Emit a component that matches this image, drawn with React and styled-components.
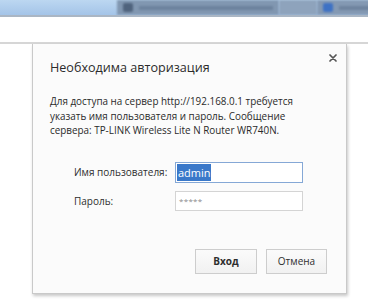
import styled, { createGlobalStyle } from "styled-components";

const Global = createGlobalStyle`
  html, body {
    margin: 0;
    padding: 0;
    background: #ffffff;
    font-family: "Open Sans", "Noto Sans", sans-serif;
  }
`;

const Page = styled.div`
  width: 368px;
  height: 304px;
  overflow: hidden;
  display: flex;
  flex-direction: column;
  background: #ffffff;
`;

const Taskbar = styled.div`
  height: 15px;
  display: flex;
  align-items: center;
  background: linear-gradient(180deg, #bcd7f1 0%, #a4c4e8 100%);
  border-bottom: 2px solid #aab6c4;
  overflow: hidden;
`;

const Tab = styled.div`
  flex: ${({ grow }) => grow || 0} 0 ${({ w }) => w}px;
  align-self: stretch;
  background: ${({ bg }) => bg};
  display: flex;
  align-items: center;
  gap: 6px;
  padding: 0 6px;
  filter: blur(1.2px);
`;

const TabIcon = styled.div`
  width: 10px;
  height: 9px;
  border-radius: 2px;
  background: ${({ bg }) => bg};
`;

const TabText = styled.div`
  flex: 1;
  height: 4px;
  background: #5f7490;
  opacity: 0.6;
`;

const Toolbar = styled.div`
  height: 25px;
  background: #ffffff;
  border-bottom: 2px solid #d6d6d6;
`;

const Content = styled.div`
  flex: 1;
  padding-left: 32px;
`;

const Dialog = styled.div`
  width: 315px;
  height: 250px;
  box-sizing: border-box;
  background: #fbfbfb;
  border: 1px solid #c9c9c9;
  border-top: none;
  box-shadow: 1px 2px 3px rgba(0, 0, 0, 0.22);
  padding: 14px 19px 0 17px;
  position: relative;
  color: #333;
`;

const Close = styled.svg`
  position: absolute;
  right: 9px;
  top: 10px;
  width: 8px;
  height: 8px;
`;

const Title = styled.div`
  font-size: 12.6px;
  color: #2b2b2b;
  line-height: 20px;
`;

const Message = styled.div`
  margin-top: 16px;
  font-size: 9.9px;
  line-height: 14.5px;
  color: #2a2a2a;
  white-space: nowrap;
`;

const Form = styled.div`
  margin-top: 24px;
  display: grid;
  grid-template-columns: 101px 128px;
  grid-template-rows: 21px 20px;
  row-gap: 8px;
  align-items: center;
  padding-left: 24px;
`;

const Label = styled.div`
  font-size: 10px;
  color: #2e2e2e;
  white-space: nowrap;
`;

const Field = styled.div`
  height: 100%;
  box-sizing: border-box;
  border: 1px solid ${({ focus }) => (focus ? "#85a8d6" : "#d4d4d4")};
  background: #fff;
  display: flex;
  align-items: center;
  padding-left: 1px;
  font-size: 11px;
`;

const Selected = styled.span`
  background: #3a78c9;
  color: #fff;
  line-height: 17px;
  padding: 0 0 0 1px;
`;

const Dots = styled.span`
  color: #8a8a8a;
  font-size: 8px;
  padding-left: 2px;
  letter-spacing: 0.3px;
`;

const Buttons = styled.div`
  margin-top: 38px;
  display: flex;
  justify-content: flex-end;
  gap: 9px;
`;

const Button = styled.div`
  width: ${({ w }) => w}px;
  height: 25px;
  box-sizing: border-box;
  border: 1px solid #cdcdcd;
  background: linear-gradient(180deg, #fbfbfb, #f1f1f1);
  display: flex;
  align-items: center;
  justify-content: center;
  font-size: 10px;
  font-weight: ${({ bold }) => (bold ? 700 : 400)};
  color: #2e2e2e;
`;

export default function App() {
  return (
    <Page>
      <Global />
      <Taskbar>
        <Tab w={105} bg="transparent" />
        <Tab w={150} bg="#8197b1">
          <TabIcon bg="#4f637d" />
          <TabText />
        </Tab>
        <Tab w={26} bg="#8ea3bc" />
        <Tab w={80} bg="#8499b3">
          <TabIcon bg="#3e72c4" />
          <TabText />
        </Tab>
        <Tab w={7} grow={1} bg="#b6c8dc" />
      </Taskbar>
      <Toolbar />
      <Content>
        <Dialog>
          <Close viewBox="0 0 8 8">
            <path d="M1 1 L7 7 M7 1 L1 7" stroke="#555" strokeWidth="1.7" strokeLinecap="round" />
          </Close>
          <Title>Необходима авторизация</Title>
          <Message>
            Для доступа на сервер http://192.168.0.1 требуется
            <br />
            указать имя пользователя и пароль. Сообщение
            <br />
            сервера: TP-LINK Wireless Lite N Router WR740N.
          </Message>
          <Form>
            <Label>Имя пользователя:</Label>
            <Field focus>
              <Selected>admin</Selected>
            </Field>
            <Label>Пароль:</Label>
            <Field>
              <Dots>*****</Dots>
            </Field>
          </Form>
          <Buttons>
            <Button w={62} bold>
              Вход
            </Button>
            <Button w={61}>Отмена</Button>
          </Buttons>
        </Dialog>
      </Content>
    </Page>
  );
}
